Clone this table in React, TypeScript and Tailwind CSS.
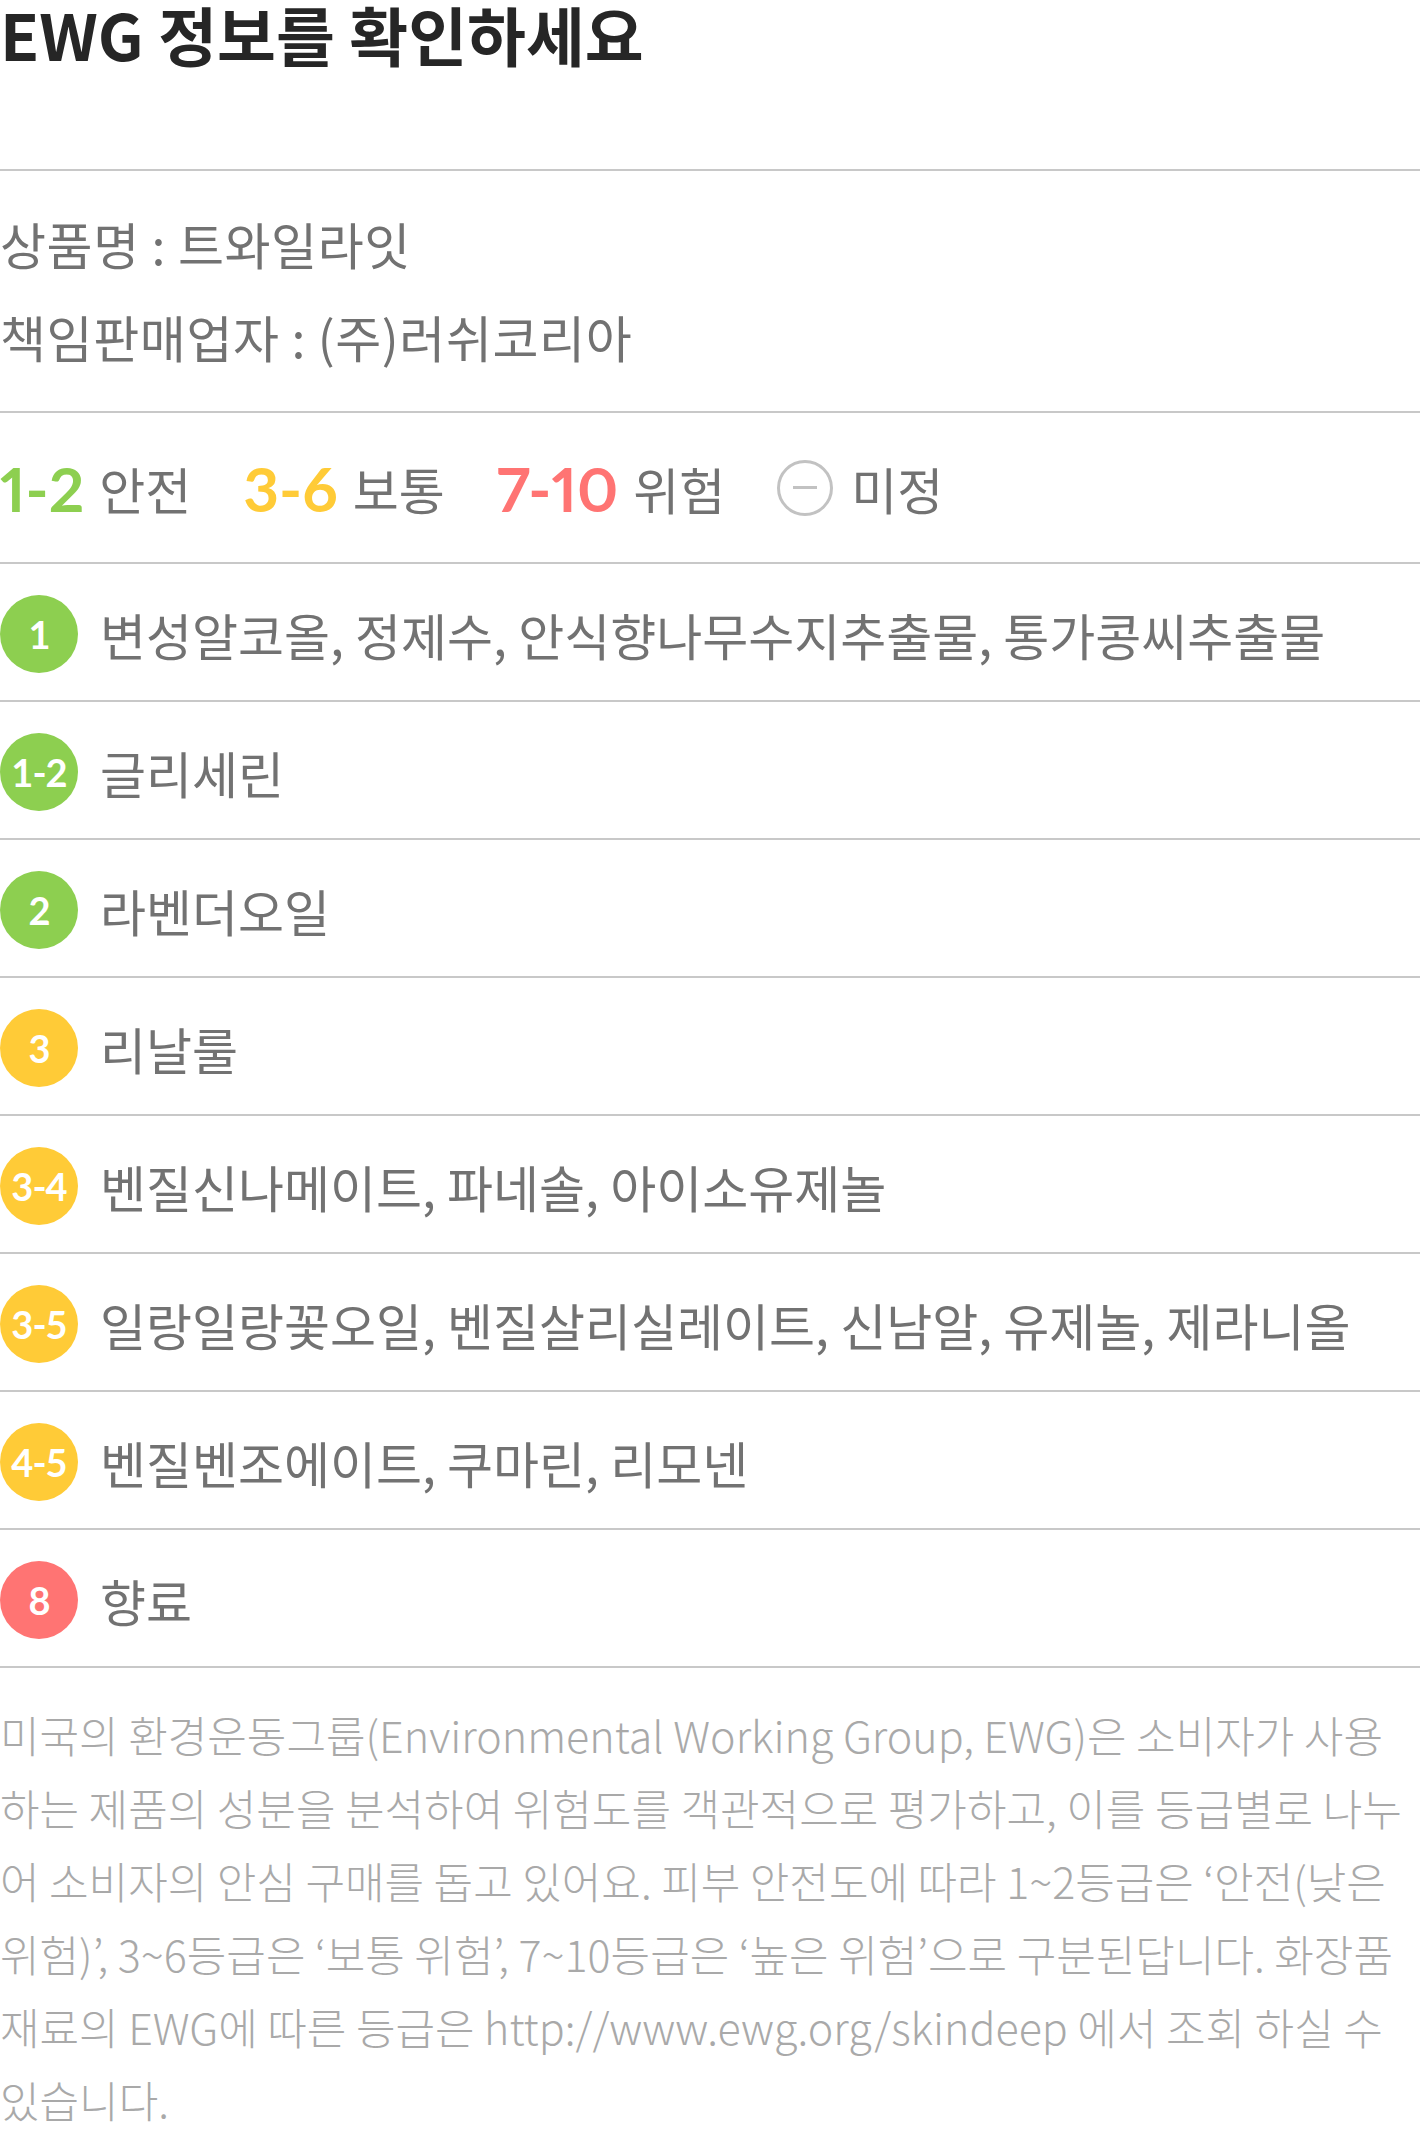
import React from "react";

const GREEN = "bg-[#8dcf50]";
const YELLOW = "bg-[#ffcb37]";
const RED = "bg-[#ff7473]";

type Row = { grade: string; color: string; text: string };

const rows: Row[] = [
  { grade: "1", color: GREEN, text: "변성알코올, 정제수, 안식향나무수지추출물, 통가콩씨추출물" },
  { grade: "1-2", color: GREEN, text: "글리세린" },
  { grade: "2", color: GREEN, text: "라벤더오일" },
  { grade: "3", color: YELLOW, text: "리날룰" },
  { grade: "3-4", color: YELLOW, text: "벤질신나메이트, 파네솔, 아이소유제놀" },
  { grade: "3-5", color: YELLOW, text: "일랑일랑꽃오일, 벤질살리실레이트, 신남알, 유제놀, 제라니올" },
  { grade: "4-5", color: YELLOW, text: "벤질벤조에이트, 쿠마린, 리모넨" },
  { grade: "8", color: RED, text: "향료" },
];

const paragraph = [
  "미국의 환경운동그룹(Environmental Working Group, EWG)은 소비자가 사용",
  "하는 제품의 성분을 분석하여 위험도를 객관적으로 평가하고, 이를 등급별로 나누",
  "어 소비자의 안심 구매를 돕고 있어요. 피부 안전도에 따라 1~2등급은 ‘안전(낮은",
  "위험)’, 3~6등급은 ‘보통 위험’, 7~10등급은 ‘높은 위험’으로 구분된답니다. 화장품",
  "재료의 EWG에 따른 등급은 http://www.ewg.org/skindeep 에서 조회 하실 수",
  "있습니다.",
];

function Badge({ grade, color }: { grade: string; color: string }) {
  return (
    <div
      className={`flex h-[78px] w-[78px] shrink-0 items-center justify-center rounded-full ${color}`}
    >
      <span className="[font-family:Lato,'Noto_Sans_CJK_KR',sans-serif] text-[38px] font-bold leading-none tracking-[-1px] text-white">
        {grade}
      </span>
    </div>
  );
}

function LegendItem({
  num,
  numColor,
  label,
  first,
}: {
  num: string;
  numColor: string;
  label: string;
  first?: boolean;
}) {
  return (
    <div className={`flex items-center gap-[15px] ${first ? "" : "ml-[52px]"}`}>
      <span
        className={`[font-family:Lato,sans-serif] text-[62px] font-bold leading-none proportional-nums ${numColor}`}
      >
        {num}
      </span>
      <span className="text-[50px] leading-none">{label}</span>
    </div>
  );
}

export default function App() {
  return (
    <div className="w-[1420px] overflow-hidden bg-white [font-family:'Noto_Sans_CJK_KR',sans-serif]">
      {/* Title */}
      <div className="h-[171px] border-b-2 border-[#c8c8c8] pt-[1px]">
        <h1 className="text-[64px] font-bold leading-[64px] text-[#262626]">
          EWG 정보를 확인하세요
        </h1>
      </div>

      {/* Product info */}
      <div className="border-b-2 border-[#c8c8c8] pt-[26px] pb-[28px] text-[50px] leading-[93px] tracking-[0.6px] text-[#727272]">
        <p>상품명 : 트와일라잇</p>
        <p>책임판매업자 : (주)러쉬코리아</p>
      </div>

      {/* Legend */}
      <div className="flex h-[151px] items-center border-b-2 border-[#c8c8c8] text-[#727272]">
        <LegendItem first num="1-2" numColor="text-[#8dcf50]" label="안전" />
        <LegendItem num="3-6" numColor="text-[#ffcb37]" label="보통" />
        <LegendItem num="7-10" numColor="text-[#ff7473]" label="위험" />
        <div className="ml-[52px] flex items-center gap-[18px]">
          <span className="flex h-[56px] w-[56px] items-center justify-center rounded-full border-[3px] border-[#c2c2c2]">
            <span className="h-[3px] w-[24px] bg-[#c2c2c2]" />
          </span>
          <span className="text-[50px] leading-none">미정</span>
        </div>
      </div>

      {/* Ingredient rows */}
      {rows.map((r) => (
        <div
          key={r.grade}
          className="flex h-[138px] items-center gap-[22px] border-b-2 border-[#c8c8c8] pt-[4px]"
        >
          <Badge grade={r.grade} color={r.color} />
          <span className="whitespace-nowrap text-[50px] leading-none text-[#727272]">
            {r.text}
          </span>
        </div>
      ))}

      {/* Description */}
      <div className="pt-[30px] pb-[20px] text-[43px] font-light leading-[73px] text-[#a9a9a9]">
        {paragraph.map((line, i) => (
          <p key={i} className="whitespace-nowrap">
            {line}
          </p>
        ))}
      </div>
    </div>
  );
}
